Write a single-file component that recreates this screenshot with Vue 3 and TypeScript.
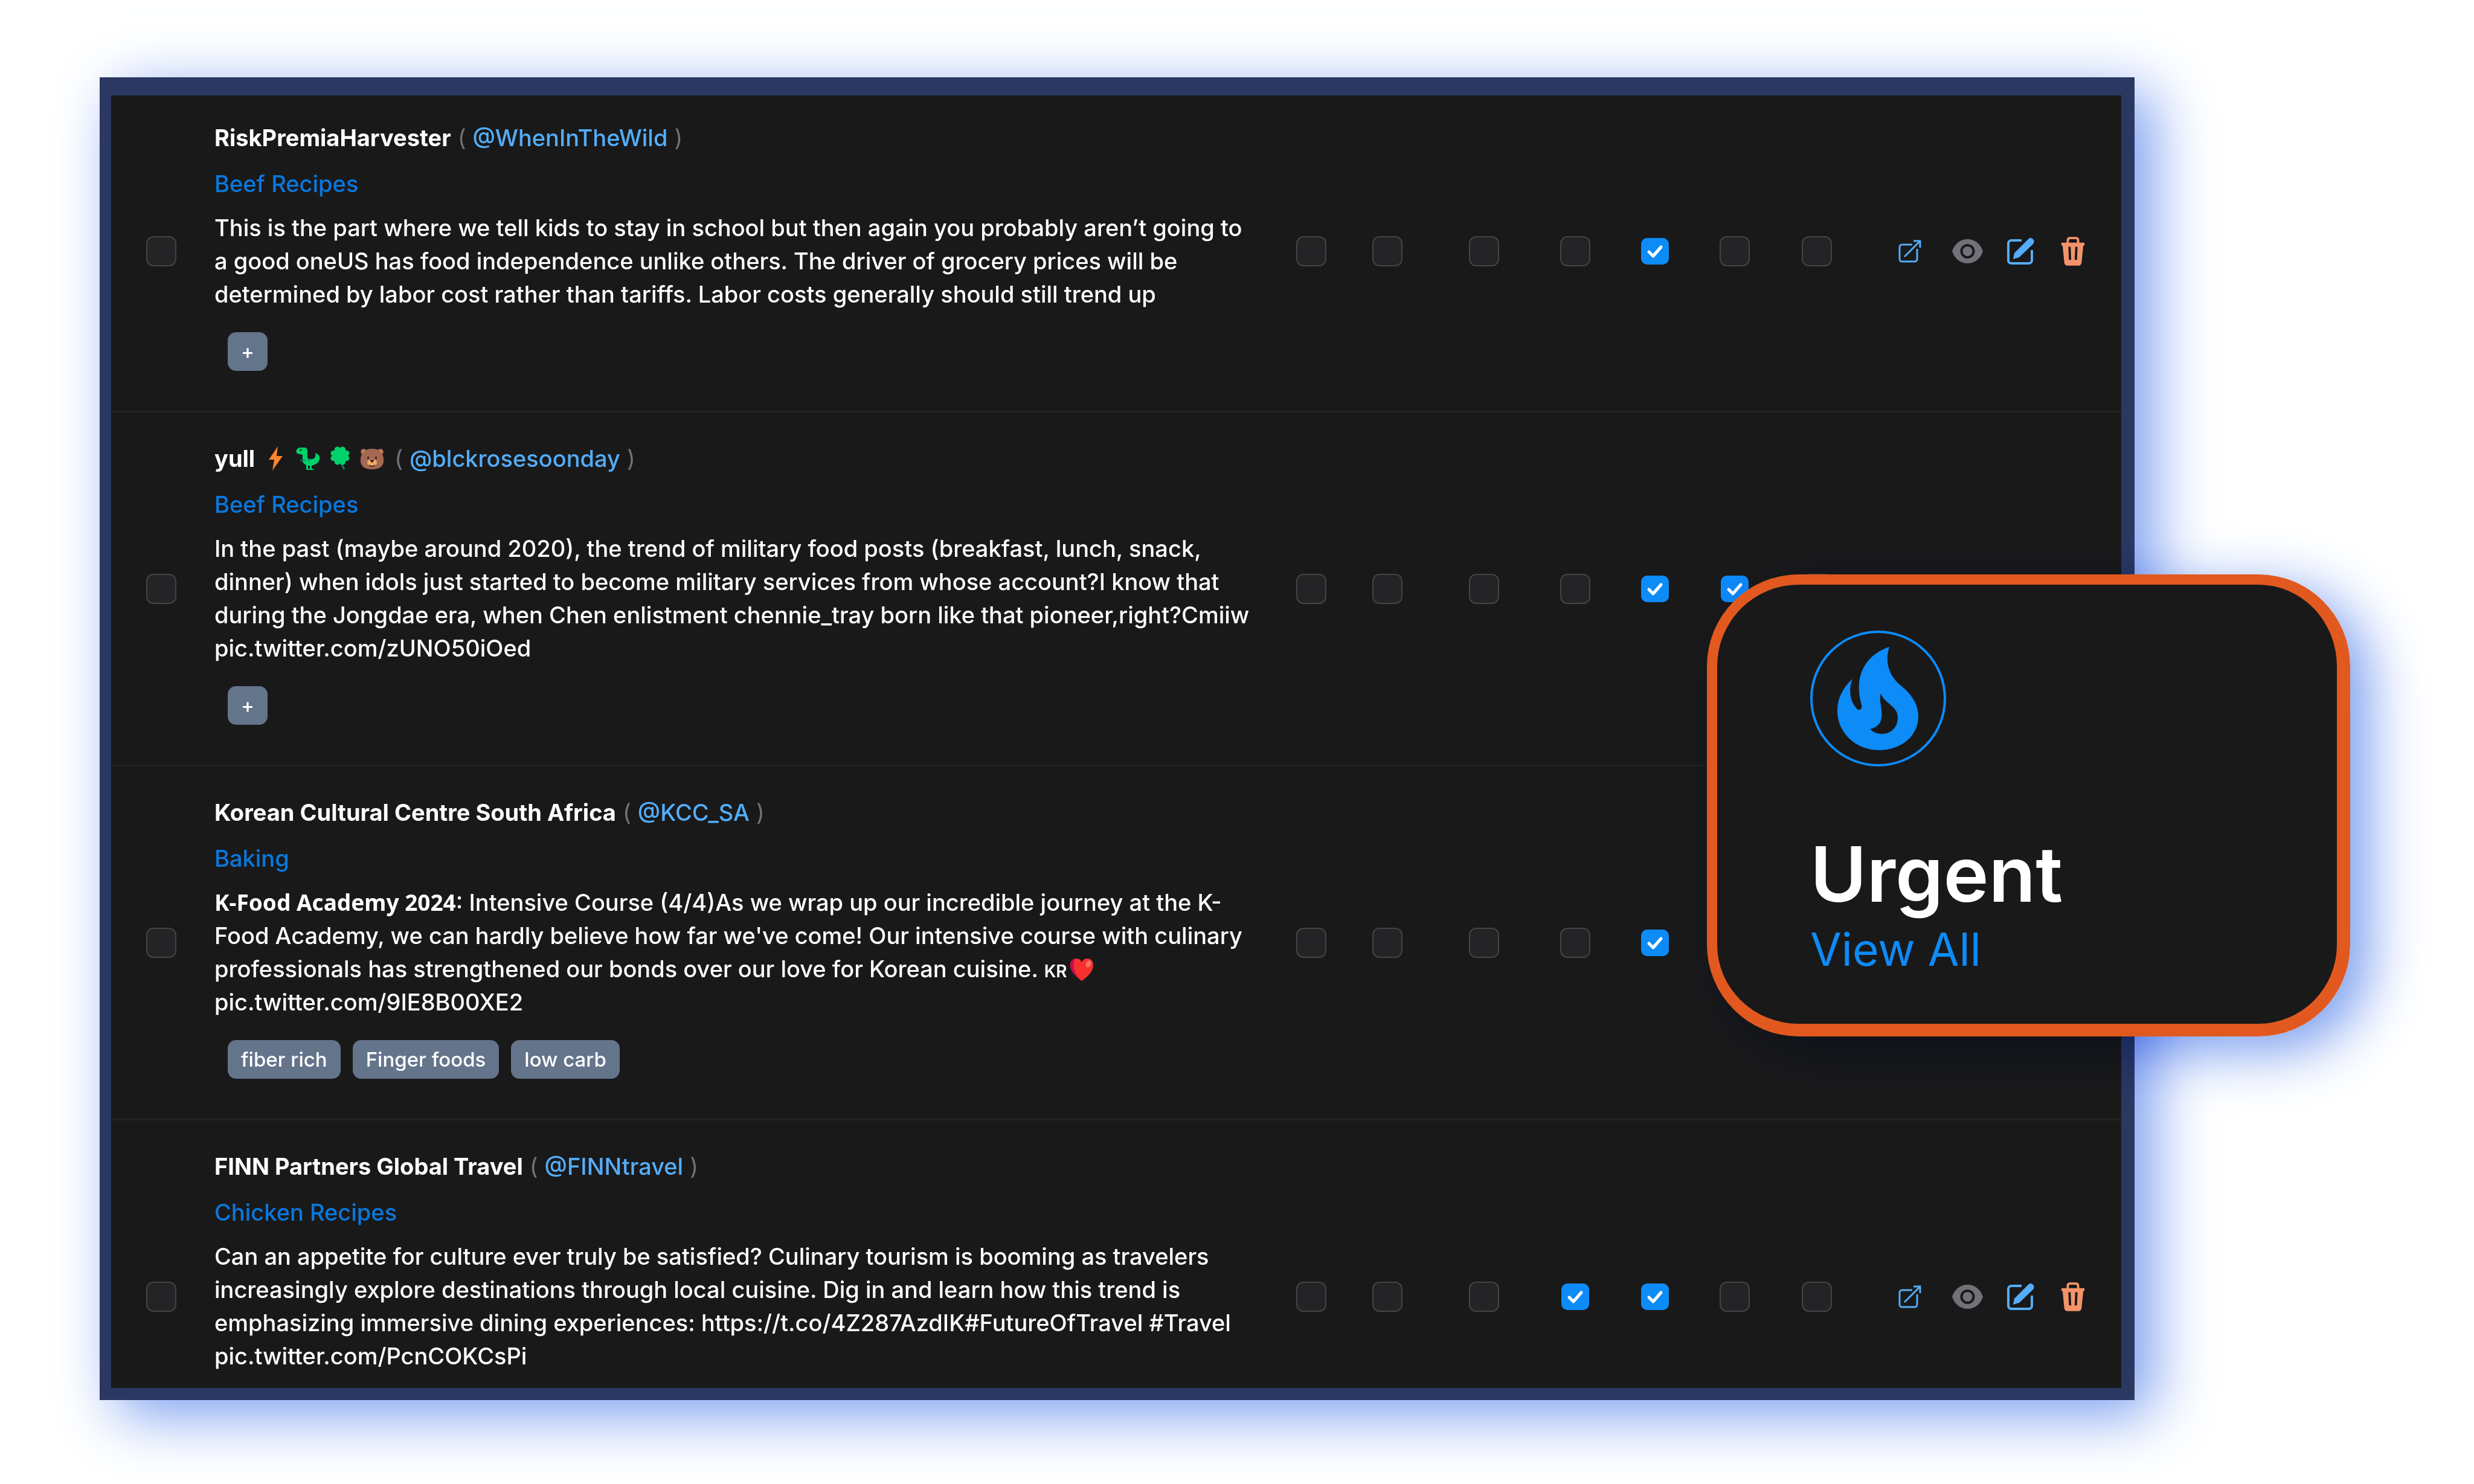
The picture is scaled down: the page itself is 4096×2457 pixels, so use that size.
<script setup lang="ts">
import { ref } from 'vue'

type EmojiName = 'bolt' | 'dino' | 'clover' | 'bear'

interface Post {
  id: number
  name: string
  emojis: EmojiName[]
  handle: string
  category: string
  lead?: string
  text: string
  region?: string
  tail?: string
  tags: string[]
  selected: boolean
  flags: boolean[]
}

const flagNames = ['Read', 'Saved', 'Relevant', 'Shared', 'Reviewed', 'Urgent', 'Archived']

const posts = ref<Post[]>([
  {
    id: 1,
    name: 'RiskPremiaHarvester',
    emojis: [],
    handle: '@WhenInTheWild',
    category: 'Beef Recipes',
    text: 'This is the part where we tell kids to stay in school but then again you probably aren’t going to a good oneUS has food independence unlike others. The driver of grocery prices will be determined by labor cost rather than tariffs. Labor costs generally should still trend up',
    tags: ['+'],
    selected: false,
    flags: [false, false, false, false, true, false, false],
  },
  {
    id: 2,
    name: 'yull',
    emojis: ['bolt', 'dino', 'clover', 'bear'],
    handle: '@blckrosesoonday',
    category: 'Beef Recipes',
    text: 'In the past (maybe around 2020), the trend of military food posts (breakfast, lunch, snack, dinner) when idols just started to become military services from whose account?I know that during the Jongdae era, when Chen enlistment chennie_tray born like that pioneer,right?Cmiiw pic.twitter.com/zUNO50iOed',
    tags: ['+'],
    selected: false,
    flags: [false, false, false, false, true, true, false],
  },
  {
    id: 3,
    name: 'Korean Cultural Centre South Africa',
    emojis: [],
    handle: '@KCC_SA',
    category: 'Baking',
    lead: 'K-Food Academy 2024',
    text: ": Intensive Course (4/4)As we wrap up our incredible journey at the K-Food Academy, we can hardly believe how far we've come! Our intensive course with culinary professionals has strengthened our bonds over our love for Korean cuisine. ",
    region: 'KR',
    tail: 'pic.twitter.com/9IE8B00XE2',
    tags: ['fiber rich', 'Finger foods', 'low carb'],
    selected: false,
    flags: [false, false, false, false, true, false, false],
  },
  {
    id: 4,
    name: 'FINN Partners Global Travel',
    emojis: [],
    handle: '@FINNtravel',
    category: 'Chicken Recipes',
    text: 'Can an appetite for culture ever truly be satisfied? Culinary tourism is booming as travelers increasingly explore destinations through local cuisine. Dig in and learn how this trend is emphasizing immersive dining experiences: https://t.co/4Z287AzdIK#FutureOfTravel #Travel pic.twitter.com/PcnCOKCsPi',
    tags: [],
    selected: false,
    flags: [false, false, false, true, true, false, false],
  },
])
</script>

<template>
  <main class="page">
    <section class="panel">
      <table class="posts">
        <colgroup>
          <col class="col-select" />
          <col />
          <col v-for="n in 7" :key="n" :class="'col-flag-' + n" />
          <col class="col-actions" />
        </colgroup>
        <tbody>
          <tr v-for="post in posts" :key="post.id">
            <td class="select">
              <input v-model="post.selected" class="check" type="checkbox" :aria-label="'Select ' + post.name" />
            </td>
            <td class="content">
              <div class="author">
                <strong>{{ post.name }}</strong>
                <span v-if="post.emojis.length" class="emojis">
                  <svg v-for="e in post.emojis" :key="e" class="emoji" viewBox="0 0 40 40" aria-hidden="true">
                    <path v-if="e === 'bolt'" fill="#ff822d" d="M23 0 8 22h9l-3 18 17-24h-10z" />
                    <g v-else-if="e === 'dino'">
                      <path fill="#00d26a" d="M6 2h8c3 0 5 2 5 5v10c0 4 4 5 8 4 5-1 6-5 5-10 5 2 8 5 7 10-1 6-5 8-10 10l-3 1v5h2l2 2h-7v-7h-3v5h2l2 2h-7v-8c-5-2-7-6-6-11v-6l-9-2C0 10-1 5 6 2z" />
                      <circle cx="8" cy="6" r="1.500" fill="#1c1c1c" />
                      <path d="M10 21l5 3M20 21l2 4M7 24l3-1" stroke="#008463" stroke-width="2" fill="none" />
                    </g>
                    <g v-else-if="e === 'clover'">
                      <path d="M20 20c1 7 4 13 7 18" fill="none" stroke="#008463" stroke-width="3" />
                      <g fill="#00d26a">
                        <path d="M20 17C12 13 10 8 11 4c1-4 7-5 9-1 2-4 8-3 9 1 1 4-1 9-9 13z" />
                        <path d="M20 14C12 18 10 23 11 27c1 4 7 5 9 1 2 4 8 3 9-1 1-4-1-9-9-13z" />
                        <path d="M21 15.500C17 8 12 6 8 7c-4 1-5 6-1 8.500-4 2.500-3 7.500 1 8.500 4 1 9-1 13-8.500z" />
                        <path d="M19 15.500C23 8 28 6 32 7c4 1 5 6 1 8.500 4 2.500 3 7.500-1 8.500-4 1-9-1-13-8.500z" />
                      </g>
                    </g>
                    <g v-else>
                      <circle cx="6" cy="9" r="5" fill="#a56953" />
                      <circle cx="34" cy="9" r="5" fill="#a56953" />
                      <circle cx="6" cy="9" r="2" fill="#ffb347" />
                      <circle cx="34" cy="9" r="2" fill="#ffb347" />
                      <path fill="#a56953" d="M20 4c12 0 18 6 19 17 1 11-5 17-19 17S0 32 1 21C2 10 8 4 20 4z" />
                      <ellipse cx="20" cy="27" rx="8" ry="6" fill="#f3ad61" />
                      <path fill="#402a32" d="M16 22h8l-3 5h-2zM12 17h3v4h-3zM25 17h3v4h-3zM15 30q5 4 10 0v2q-5 4-10 0z" />
                    </g>
                  </svg>
                </span>
                <span class="paren">(</span>
                <a class="handle" href="#">{{ post.handle }}</a>
                <span class="paren">)</span>
              </div>
              <a class="category" href="#">{{ post.category }}</a>
              <p class="body"><strong v-if="post.lead" class="lead">{{ post.lead }}</strong>{{ post.text }}<template v-if="post.region"><span class="region">{{ post.region }}</span><svg class="heart" viewBox="0 0 40 40" aria-hidden="true"><path fill="#f8312f" d="M20 39C9 31 1 23 1 13 1 6 5 2 11 2c4 0 7 2 9 6 2-4 5-6 9-6 6 0 10 4 10 11 0 10-8 18-19 26z" /><path fill="#ca0b4a" d="M20 39C9 31 1 23 1 13 1 6 5 2 11 2 3 7 6 27 20 39z" /><ellipse cx="31" cy="11" rx="4" ry="6" fill="#f37366" transform="rotate(25 31 11)" /></svg> {{ post.tail }}</template></p>
              <div class="tags">
                <button v-for="tag in post.tags" :key="tag" type="button" class="tag">{{ tag }}</button>
              </div>
            </td>
            <td v-for="(name, i) in flagNames" :key="name" class="flag">
              <input v-model="post.flags[i]" class="check" type="checkbox" :aria-label="name" />
            </td>
            <td class="actions-cell">
              <div class="actions">
                <a class="action open" href="#" aria-label="Open post">
                  <svg width="38" height="38" viewBox="0 0 38 38" fill="none" stroke="#54adf8" stroke-width="3">
                    <path d="M23 8H6a4 4 0 0 0-4 4v20a4 4 0 0 0 4 4h21a4 4 0 0 0 4-4V15" />
                    <path d="M10 28 35 3M25 2h11v11" />
                  </svg>
                </a>
                <button type="button" class="action" aria-label="Preview">
                  <svg width="53" height="42" viewBox="0 0 53 42">
                    <path fill="#71717a" fill-rule="evenodd" d="M26.500 1C39 1 48 9 52 21 48 33 39 41 26.500 41S5 33 1 21C5 9 14 1 26.500 1zm0 8a12 12 0 1 0 0 24 12 12 0 0 0 0-24z" />
                    <circle cx="26.500" cy="21" r="8" fill="#71717a" />
                  </svg>
                </button>
                <button type="button" class="action" aria-label="Edit">
                  <svg width="46" height="46" viewBox="0 0 46 46">
                    <path d="M25 5H8a5 5 0 0 0-5 5v28a5 5 0 0 0 5 5h29a5 5 0 0 0 5-5V21" fill="none" stroke="#54adf8" stroke-width="4" />
                    <path fill="#54adf8" d="M11 36l2-10L36 3c3-3 6-2 8 0s2 5 0 8L21 33z" />
                  </svg>
                </button>
                <button type="button" class="action" aria-label="Delete">
                  <svg width="40" height="48" viewBox="0 0 42 50">
                    <path d="M12 12V6q0-4 4-4h10q4 0 4 4v6" fill="none" stroke="#f4936a" stroke-width="4" />
                    <path fill="#f4936a" fill-rule="evenodd" d="M1 10h40v5h-2l-3 30q-1 5-5 5H11q-4 0-5-5L3 15H1zm12 7 1 23h4l-1-23zm12 0-1 23h4l1-23z" />
                  </svg>
                </button>
              </div>
            </td>
          </tr>
        </tbody>
      </table>
    </section>

    <aside class="callout">
      <div class="callout-glow"></div>
      <div class="card">
        <svg class="flame" viewBox="0 0 225 225" aria-hidden="true">
          <circle cx="112.500" cy="112.500" r="110.500" fill="none" stroke="#0d8bf7" stroke-width="4" />
          <path fill="#0d8bf7" fill-rule="evenodd" d="M131 27C124 50 128 73 150 91C170 107 179 124 179 142C179 176 149 198 114 198C74 198 45 168 45 133C45 113 53 96 70 80C63 97 66 117 76 128C80 134 87 131 85 123C71 75 92 40 131 27ZM117 104C113 117 120 126 118 144C117 154 110 161 99 163C105 169 111 171 119 171C134 171 145 160 145 144C145 124 122 121 117 104Z" />
        </svg>
        <h2>Urgent</h2>
        <a class="view-all" href="#">View All</a>
      </div>
    </aside>
  </main>
</template>

<style>
body {
  margin: 0;
  background: #ffffff;
}
</style>

<style scoped>
.page {
  position: relative;
  box-sizing: border-box;
  display: flex;
  height: 100vh;
  padding: 128px 562px 139px 165px;
  overflow: hidden;
  font-family: Inter, "Liberation Sans", sans-serif;
  color: #ffffff;
}

.panel {
  flex: 1;
  box-sizing: border-box;
  overflow: hidden;
  border: solid #2a3862;
  border-width: 30px 22px 20px 19px;
  background: #19191a;
  box-shadow: 30px 24px 94px #789cef;
}

/* The list is scrolled slightly past its first row. */
.posts {
  width: 100%;
  margin-top: -6px;
  table-layout: fixed;
  border-collapse: collapse;
}

.col-select { width: 171px; }
.col-flag-1 { width: 126px; }
.col-flag-2 { width: 126px; }
.col-flag-3 { width: 194px; }
.col-flag-4 { width: 108px; }
.col-flag-5 { width: 156px; }
.col-flag-6 { width: 108px; }
.col-flag-7 { width: 164px; }
.col-actions { width: 422px; }

tr {
  border-bottom: 3px solid #222224;
}

td {
  padding: 0;
  vertical-align: middle;
}

.select {
  padding-left: 58px;
}

.flag {
  text-align: center;
}

.check {
  appearance: none;
  box-sizing: border-box;
  display: inline-block;
  width: 50px;
  height: 50px;
  margin: 0;
  border: 2px solid #444446;
  border-radius: 12px;
  background: #242426;
  vertical-align: middle;
}

.check:checked {
  width: 46px;
  height: 44px;
  border: 0;
  border-radius: 10px;
  background: #0d8bf7 url("data:image/svg+xml,%3Csvg xmlns='http://www.w3.org/2000/svg' viewBox='0 0 46 44'%3E%3Cpath d='M13 23l7 7 13-15' fill='none' stroke='white' stroke-width='5' stroke-linecap='round' stroke-linejoin='round'/%3E%3C/svg%3E") center / 100% 100% no-repeat;
}

.content {
  padding: 48px 24px 66px 0;
}

.author {
  display: flex;
  align-items: center;
  gap: 11px;
  height: 56px;
  font-size: 38px;
  font-weight: 450;
  line-height: 56px;
}

.author strong {
  font-weight: 650;
}

.emojis {
  display: flex;
  gap: 13px;
  padding: 0 6px 0 4px;
}

.emoji {
  width: 40px;
  height: 40px;
}

.paren {
  font-weight: 400;
  color: #71717a;
}

.handle {
  color: #54adf8;
  text-decoration: none;
}

.category {
  display: block;
  margin-top: 20px;
  font-size: 38px;
  font-weight: 460;
  line-height: 56px;
  color: #0a78dc;
  text-decoration: none;
}

.body {
  margin: 18px 0 0;
  font-size: 38px;
  font-weight: 460;
  line-height: 55px;
}

.lead {
  font-family: "Noto Sans", sans-serif;
  font-size: 37px;
  font-weight: 700;
  line-height: 1;
}

.region {
  font-size: 28px;
  font-weight: 600;
  line-height: 1;
}

.heart {
  width: 40px;
  height: 40px;
  margin-left: 4px;
  vertical-align: -7px;
}

.tags {
  display: flex;
  gap: 20px;
  min-height: 64px;
  margin-top: 35px;
  padding-left: 22px;
}

.tag {
  height: 64px;
  padding: 0 22px;
  border: 0;
  border-radius: 14px;
  background: #64748b;
  font-family: inherit;
  font-size: 33px;
  font-weight: 450;
  line-height: 64px;
  color: #ffffff;
}

.actions {
  display: flex;
  align-items: center;
  padding-left: 28px;
}

.action {
  display: flex;
  align-items: center;
  justify-content: center;
  width: 87px;
  height: 64px;
  padding: 0;
  border: 0;
  background: none;
}

.open {
  margin-right: 9px;
}

.callout {
  position: absolute;
  top: 951px;
  right: 205px;
}

.callout-glow {
  position: absolute;
  inset: 0;
  border-radius: 152px;
  box-shadow: 30px 24px 94px #789cef;
  mix-blend-mode: multiply;
}

.card {
  position: relative;
  box-sizing: border-box;
  width: 1065px;
  padding: 76px 154px 73px;
  border: solid #e1591f;
  border-width: 17px 22px 21px 17px;
  border-radius: 152px;
  background: #19191a;
}

.flame {
  display: block;
  width: 225px;
  height: 225px;
}

.card h2 {
  margin: 114px 0 11px;
  font-size: 127px;
  font-weight: 600;
  line-height: 128px;
}

.view-all {
  display: block;
  font-size: 75px;
  line-height: 100px;
  color: #0d8bf7;
  text-decoration: none;
}
</style>
